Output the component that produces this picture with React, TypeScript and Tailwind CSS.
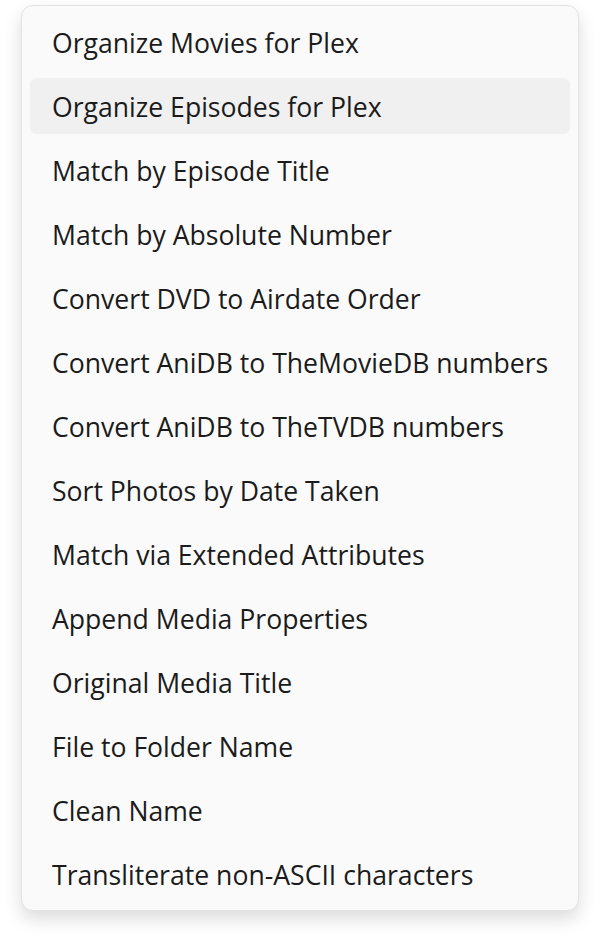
const items = [
  "Organize Movies for Plex",
  "Organize Episodes for Plex",
  "Match by Episode Title",
  "Match by Absolute Number",
  "Convert DVD to Airdate Order",
  "Convert AniDB to TheMovieDB numbers",
  "Convert AniDB to TheTVDB numbers",
  "Sort Photos by Date Taken",
  "Match via Extended Attributes",
  "Append Media Properties",
  "Original Media Title",
  "File to Folder Name",
  "Clean Name",
  "Transliterate non-ASCII characters",
];

export default function App() {
  return (
    <div className="w-[600px] h-[948px] bg-white pt-[5px] pl-[21px]">
      <div className="w-[558px] rounded-[12px] border border-[#e3e3e3] bg-[#fafafa] py-[8px] px-[8px] flex flex-col gap-[8px] shadow-[0_8px_18px_rgba(0,0,0,0.14)]">
        {items.map((label, i) => (
          <div
            key={label}
            className={
              i === 1
                ? "h-[56px] flex items-center pl-[22px] pt-[2px] rounded-[6px] bg-[#f0f0f0]"
                : "h-[56px] flex items-center pl-[22px] pt-[2px] rounded-[6px]"
            }
          >
            <span className="font-['Open_Sans',sans-serif] text-[26.6px] text-[#1b1b1b] leading-none">
              {label}
            </span>
          </div>
        ))}
      </div>
    </div>
  );
}
